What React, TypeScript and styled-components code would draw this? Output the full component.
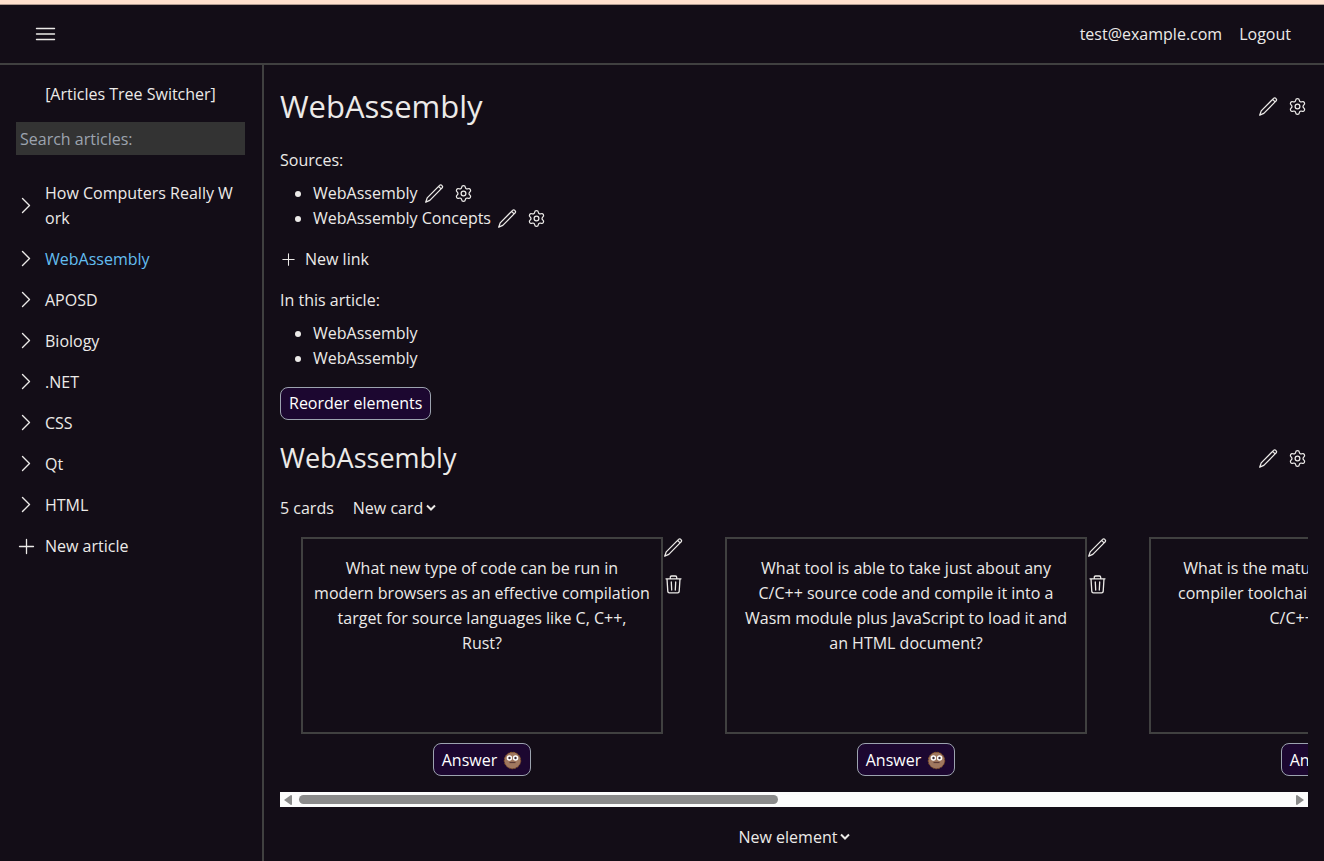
import React from "react";
import styled, { createGlobalStyle } from "styled-components";
import { Settings } from "lucide-react";

const GlobalStyle = createGlobalStyle`
  *, *::before, *::after { box-sizing: border-box; }
  body {
    margin: 0;
    background: #130d17;
    color: #eceae8;
    font-family: "Segoe UI", "Open Sans", "Noto Sans", sans-serif;
    font-size: 16px;
    line-height: 25px;
  }
  h1, h2, p, ul { margin: 0; padding: 0; font-weight: 400; }
  button, input, select { font: inherit; color: inherit; }
  a { color: inherit; text-decoration: none; }
  svg { display: block; }
`;

const Page = styled.div`
  display: flex;
  flex-direction: column;
  min-height: 100vh;
`;

const Strip = styled.div`
  height: 5px;
  background: #ffe0ce;
  border-bottom: 1px solid #b09a90;
`;

const Header = styled.header`
  display: flex;
  align-items: center;
  justify-content: space-between;
  height: 60px;
  padding: 0 33px 0 35px;
  border-bottom: 2px solid #404040;
`;

const Account = styled.nav`
  display: flex;
  gap: 17px;
`;

const PlainButton = styled.button`
  display: flex;
  align-items: center;
  align-self: flex-start;
  gap: 8px;
  padding: 0;
  border: 0;
  background: none;
  cursor: pointer;
`;

const IconButton = styled(PlainButton)`
  flex: none;
  align-self: center;
  justify-content: center;
  width: 21px;
  height: 21px;
`;

const Body = styled.div`
  display: flex;
  flex: 1;
`;

const Sidebar = styled.aside`
  display: flex;
  flex-direction: column;
  flex: 0 0 264px;
  gap: 15px;
  padding: 17px 17px 16px 16px;
  border-right: 2px solid #404040;
`;

const Switcher = styled.p`
  text-align: center;
`;

const Search = styled.input`
  width: 100%;
  height: 33px;
  padding: 0 4px;
  border: 0;
  background: #333333;
  &::placeholder { color: #9ca3af; opacity: 1; }
`;

const Tree = styled.ul`
  display: flex;
  flex-direction: column;
  gap: 16px;
  padding-top: 11px;
  list-style: none;
`;

const TreeRow = styled.li`
  display: flex;
  align-items: center;
  gap: 8px;
`;

const TreeLink = styled.a<{ $active?: boolean }>`
  flex: 1;
  padding-right: 8px;
  word-break: break-all;
  color: ${(p) => (p.$active ? "#63bdf0" : "inherit")};
`;

const Main = styled.main`
  display: flex;
  flex-direction: column;
  flex: 1;
  gap: 16px;
  min-width: 0;
  padding: 16px;
`;

const TitleRow = styled.div`
  display: flex;
  align-items: center;
  justify-content: space-between;
`;

const Title = styled.h1`
  font-size: 31px;
  line-height: 51px;
`;

const Subtitle = styled.h2`
  font-size: 27px;
  line-height: 44px;
`;

const Actions = styled.div`
  display: flex;
  gap: 8px;
`;

const Group = styled.section`
  display: flex;
  flex-direction: column;
  gap: 8px;
`;

const Bullets = styled.ul`
  padding-left: 33px;
`;

const BulletLine = styled.div`
  display: flex;
  align-items: center;
  gap: 6px;
`;

const OutlineButton = styled.button<{ $center?: boolean }>`
  display: flex;
  align-items: center;
  align-self: ${(p) => (p.$center ? "center" : "flex-start")};
  gap: 6px;
  height: 33px;
  padding: ${(p) => (p.$center ? "2px 8px 0" : "0 8px")};
  border: 1px solid #9ca3af;
  border-radius: 8px;
  background: #1c0730;
  color: #ffffff;
  white-space: nowrap;
  cursor: pointer;
`;

const CardsInfo = styled.div`
  display: flex;
  gap: 19px;
`;

const SelectBox = styled.div`
  position: relative;
  svg {
    position: absolute;
    right: 0;
    top: 8px;
    pointer-events: none;
  }
`;

const Select = styled.select`
  display: block;
  height: 25px;
  padding: 0 12px 0 0;
  border: 0;
  background: none;
  appearance: none;
`;

const Footer = styled.div`
  display: flex;
  justify-content: center;
  padding-top: 2px;
`;

const CardStrip = styled.div`
  display: flex;
  overflow: hidden;
`;

const CardSlot = styled.article`
  display: flex;
  flex: 0 0 424px;
  padding: 0 20px 0 21px;
`;

const CardColumn = styled.div`
  display: flex;
  flex-direction: column;
  gap: 9px;
  flex: 0 0 362px;
`;

const CardFace = styled.div`
  height: 197px;
  padding: 17px 8px;
  border: 2px solid #404040;
  text-align: center;
  white-space: pre-line;
`;

const CardActions = styled.div`
  display: flex;
  flex-direction: column;
  gap: 16px;
`;

const ScrollTrack = styled.div`
  display: flex;
  align-items: center;
  height: 15px;
  padding: 0 4px;
  background: #fcfcfc;
`;

const ScrollRail = styled.div`
  flex: 1;
  margin: 0 7px;
`;

const ScrollThumb = styled.div`
  height: 9px;
  width: calc(48% + 4px);
  border-radius: 5px;
  background: #8b8b8b;
`;

const line = { fill: "none", stroke: "currentColor", strokeLinecap: "round", strokeLinejoin: "round" } as const;

const MenuIcon = () => (
  <svg width="21" height="21" viewBox="0 0 21 21" {...line} strokeWidth="1.4">
    <path d="M1.5 4.5h18M1.5 10h18M1.5 15.5h18" />
  </svg>
);

const ChevronIcon = () => (
  <svg width="21" height="21" viewBox="0 0 21 21" {...line} strokeWidth="1.4">
    <path d="M6.5 2.5l7 7-7 7" />
  </svg>
);

const PlusIcon = ({ size }: { size: number }) => (
  <svg width={size} height={size} viewBox="0 0 21 21" {...line} strokeWidth="1.3">
    <path d="M10.5 3.5v14M3.5 10.5h14" />
  </svg>
);

const PencilIcon = () => (
  <svg width="21" height="21" viewBox="0 0 21 21" {...line} strokeWidth="1.3">
    <path d="M1.7 19.2L3.2 14.9 15.6 2.4a1.5 1.5 0 0 1 2.2 0l.3.3a1.5 1.5 0 0 1 0 2.2L5.8 17.4zM14.6 3.4l2.5 2.5" />
  </svg>
);

const TrashIcon = () => (
  <svg width="21" height="21" viewBox="0 0 21 21" {...line} strokeWidth="1.3">
    <path d="M3 4.8h15M7.3 4.5V3.3q0-1.3 1.3-1.3h3.8q1.3 0 1.3 1.3v1.2M4 4.8l.8 12.6q.1 1.4 1.5 1.4h8.4q1.4 0 1.5-1.4L17 4.8M8.3 8l.4 8M12.7 8l-.4 8" />
  </svg>
);

const GearIcon = () => <Settings size={19} strokeWidth={1.6} />;

const ArrowDown = () => (
  <svg width="10" height="8" viewBox="0 0 10 8" fill="none" stroke="currentColor" strokeWidth="2">
    <path d="M1 1.5l4 4 4-4" />
  </svg>
);

const FaceIcon = () => (
  <svg width="19" height="19" viewBox="0 0 19 19">
    <circle cx="9.5" cy="9.5" r="8.2" fill="#a0785f" stroke="#8f5b2c" strokeWidth="1" strokeDasharray="2 1" />
    <circle cx="6.4" cy="7" r="2.7" fill="#ffffff" />
    <circle cx="12.6" cy="7" r="2.7" fill="#ffffff" />
    <circle cx="6.5" cy="7" r="1.2" fill="#3b2a33" />
    <circle cx="12.5" cy="7" r="1.2" fill="#3b2a33" />
    <path d="M6.5 11.5h6" stroke="#5c3b35" strokeWidth="1.2" />
  </svg>
);

const ScrollArrow = ({ left }: { left?: boolean }) => (
  <svg width="8" height="10" viewBox="0 0 8 10" fill="#8b8b8b">
    <path d={left ? "M8 0.8v8.4q0 .8-1 .8L0 5 7 0q1 0 1 .8z" : "M0 .8v8.4q0 .8 1 .8L8 5 1 0Q0 0 0 .8z"} />
  </svg>
);

const EditActions = () => (
  <Actions>
    <IconButton aria-label="Edit"><PencilIcon /></IconButton>
    <IconButton aria-label="Settings"><GearIcon /></IconButton>
  </Actions>
);

const Picker = ({ label }: { label: string }) => (
  <SelectBox>
    <Select aria-label={label}>
      <option>{label}</option>
    </Select>
    <ArrowDown />
  </SelectBox>
);

const articles = ["How Computers Really Work", "WebAssembly", "APOSD", "Biology", ".NET", "CSS", "Qt", "HTML"];

const sources = ["WebAssembly", "WebAssembly Concepts"];

const cards = [
  "What new type of code can be run in\nmodern browsers as an effective compilation\ntarget for source languages like C, C++,\nRust?",
  "What tool is able to take just about any\nC/C++ source code and compile it into a\nWasm module plus JavaScript to load it and\nan HTML document?",
  "What is the mature and widely adopted\ncompiler toolchain for languages such as\nC/C++ and Rust?",
];

export default function App() {
  return (
    <>
      <GlobalStyle />
      <Page>
        <Strip />
        <Header>
          <IconButton aria-label="Menu"><MenuIcon /></IconButton>
          <Account>
            <a href="#account">test@example.com</a>
            <PlainButton>Logout</PlainButton>
          </Account>
        </Header>
        <Body>
          <Sidebar>
            <Switcher>[Articles Tree Switcher]</Switcher>
            <Search type="search" placeholder="Search articles:" aria-label="Search articles" />
            <Tree>
              {articles.map((name) => (
                <TreeRow key={name}>
                  <IconButton aria-label={`Expand ${name}`}><ChevronIcon /></IconButton>
                  <TreeLink href="#article" $active={name === "WebAssembly"}>{name}</TreeLink>
                </TreeRow>
              ))}
              <li>
                <PlainButton><PlusIcon size={21} />New article</PlainButton>
              </li>
            </Tree>
          </Sidebar>
          <Main>
            <TitleRow>
              <Title>WebAssembly</Title>
              <EditActions />
            </TitleRow>
            <Group>
              <p>Sources:</p>
              <Bullets>
                {sources.map((name) => (
                  <li key={name}>
                    <BulletLine>
                      <a href="#source">{name}</a>
                      <EditActions />
                    </BulletLine>
                  </li>
                ))}
              </Bullets>
            </Group>
            <PlainButton><PlusIcon size={17} />New link</PlainButton>
            <Group>
              <p>In this article:</p>
              <Bullets>
                <li><a href="#first">WebAssembly</a></li>
                <li><a href="#second">WebAssembly</a></li>
              </Bullets>
            </Group>
            <OutlineButton>Reorder elements</OutlineButton>
            <TitleRow>
              <Subtitle>WebAssembly</Subtitle>
              <EditActions />
            </TitleRow>
            <CardsInfo>
              <span>5 cards</span>
              <Picker label="New card" />
            </CardsInfo>
            <CardStrip>
              {cards.map((question) => (
                <CardSlot key={question}>
                  <CardColumn>
                    <CardFace>{question}</CardFace>
                    <OutlineButton $center>Answer <FaceIcon /></OutlineButton>
                  </CardColumn>
                  <CardActions>
                    <IconButton aria-label="Edit card"><PencilIcon /></IconButton>
                    <IconButton aria-label="Delete card"><TrashIcon /></IconButton>
                  </CardActions>
                </CardSlot>
              ))}
            </CardStrip>
            <ScrollTrack>
              <ScrollArrow left />
              <ScrollRail><ScrollThumb /></ScrollRail>
              <ScrollArrow />
            </ScrollTrack>
            <Footer>
              <Picker label="New element" />
            </Footer>
          </Main>
        </Body>
      </Page>
    </>
  );
}
